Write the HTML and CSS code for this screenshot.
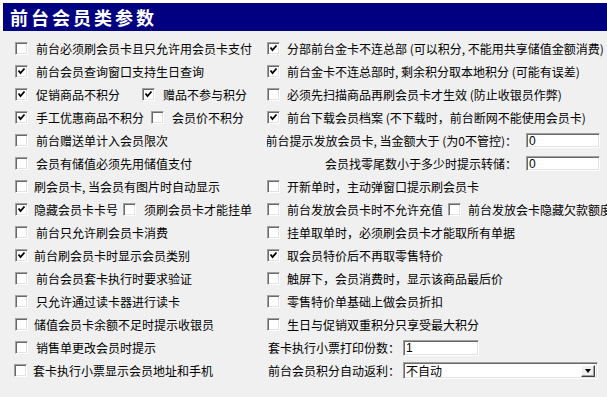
FILE: index.html
```html
<!DOCTYPE html>
<html lang="zh-CN">
<head>
    <meta charset="UTF-8">
    <title>前台会员类参数</title>
    <link rel="stylesheet" href="styles.css">
</head>
<body>
    <div class="title-wrap">
        <div class="title">前台会员类参数</div>
    </div>

    <div class="params">
        <!-- row 1 -->
        <div class="cell"><span class="cb"></span><span class="txt">前台必须刷会员卡且只允许用会员卡支付</span></div>
        <div class="cell right"><span class="cb on"><svg viewBox="0 0 9 9"><polyline points="1.5,3.5 3.5,6 7.5,1.5"/></svg></span><span class="txt">分部前台金卡不连总部 (可以积分, 不能用共享储值金额消费)</span></div>

        <!-- row 2 -->
        <div class="cell"><span class="cb on"><svg viewBox="0 0 9 9"><polyline points="1.5,3.5 3.5,6 7.5,1.5"/></svg></span><span class="txt">前台会员查询窗口支持生日查询</span></div>
        <div class="cell right"><span class="cb on"><svg viewBox="0 0 9 9"><polyline points="1.5,3.5 3.5,6 7.5,1.5"/></svg></span><span class="txt">前台金卡不连总部时, 剩余积分取本地积分 (可能有误差)</span></div>

        <!-- row 3 -->
        <div class="cell">
            <span class="cb on"><svg viewBox="0 0 9 9"><polyline points="1.5,3.5 3.5,6 7.5,1.5"/></svg></span><span class="txt">促销商品不积分</span>
            <span class="cb on sub-wide"><svg viewBox="0 0 9 9"><polyline points="1.5,3.5 3.5,6 7.5,1.5"/></svg></span><span class="txt">赠品不参与积分</span>
        </div>
        <div class="cell right"><span class="cb"></span><span class="txt">必须先扫描商品再刷会员卡才生效 (防止收银员作弊)</span></div>

        <!-- row 4 -->
        <div class="cell">
            <span class="cb on"><svg viewBox="0 0 9 9"><polyline points="1.5,3.5 3.5,6 7.5,1.5"/></svg></span><span class="txt">手工优惠商品不积分</span>
            <span class="cb sub"></span><span class="txt">会员价不积分</span>
        </div>
        <div class="cell right"><span class="cb on"><svg viewBox="0 0 9 9"><polyline points="1.5,3.5 3.5,6 7.5,1.5"/></svg></span><span class="txt">前台下载会员档案 (不下载时，前台断网不能使用会员卡)</span></div>

        <!-- row 5 -->
        <div class="cell"><span class="cb"></span><span class="txt">前台赠送单计入会员限次</span></div>
        <div class="cell right field-end">
            <span class="lbl">前台提示发放会员卡, 当金额大于 (为0不管控)：</span>
            <input class="box short" type="text" value="0">
        </div>

        <!-- row 6 -->
        <div class="cell"><span class="cb"></span><span class="txt">会员有储值必须先用储值支付</span></div>
        <div class="cell right field-end">
            <span class="lbl">会员找零尾数小于多少时提示转储：</span>
            <input class="box short" type="text" value="0">
        </div>

        <!-- row 7 -->
        <div class="cell"><span class="cb"></span><span class="txt tight">刷会员卡, 当会员有图片时自动显示</span></div>
        <div class="cell right"><span class="cb"></span><span class="txt">开新单时，主动弹窗口提示刷会员卡</span></div>

        <!-- row 8 -->
        <div class="cell">
            <span class="cb on"><svg viewBox="0 0 9 9"><polyline points="1.5,3.5 3.5,6 7.5,1.5"/></svg></span><span class="txt tight">隐藏会员卡卡号</span>
            <span class="cb sub-close"></span><span class="txt">须刷会员卡才能挂单</span>
        </div>
        <div class="cell right">
            <span class="cb"></span><span class="txt">前台发放会员卡时不允许充值</span>
            <span class="cb sub-close"></span><span class="txt">前台发放会卡隐藏欠款额度</span>
        </div>

        <!-- row 9 -->
        <div class="cell"><span class="cb"></span><span class="txt">前台只允许刷会员卡消费</span></div>
        <div class="cell right"><span class="cb"></span><span class="txt">挂单取单时，必须刷会员卡才能取所有单据</span></div>

        <!-- row 10 -->
        <div class="cell"><span class="cb on"><svg viewBox="0 0 9 9"><polyline points="1.5,3.5 3.5,6 7.5,1.5"/></svg></span><span class="txt tight">前台刷会员卡时显示会员类别</span></div>
        <div class="cell right"><span class="cb on"><svg viewBox="0 0 9 9"><polyline points="1.5,3.5 3.5,6 7.5,1.5"/></svg></span><span class="txt">取会员特价后不再取零售特价</span></div>

        <!-- row 11 -->
        <div class="cell"><span class="cb"></span><span class="txt">前台会员套卡执行时要求验证</span></div>
        <div class="cell right"><span class="cb"></span><span class="txt">触屏下，会员消费时，显示该商品最后价</span></div>

        <!-- row 12 -->
        <div class="cell"><span class="cb"></span><span class="txt">只允许通过读卡器进行读卡</span></div>
        <div class="cell right"><span class="cb"></span><span class="txt tight">零售特价单基础上做会员折扣</span></div>

        <!-- row 13 -->
        <div class="cell"><span class="cb"></span><span class="txt tight">储值会员卡余额不足时提示收银员</span></div>
        <div class="cell right"><span class="cb"></span><span class="txt">生日与促销双重积分只享受最大积分</span></div>

        <!-- row 14 -->
        <div class="cell"><span class="cb"></span><span class="txt">销售单更改会员时提示</span></div>
        <div class="cell right field">
            <span class="lbl">套卡执行小票打印份数：</span>
            <input class="box copies" type="text" value="1">
        </div>

        <!-- row 15 -->
        <div class="cell last"><span class="cb"></span><span class="txt tight">套卡执行小票显示会员地址和手机</span></div>
        <div class="cell right field">
            <span class="lbl">前台会员积分自动返利：</span>
            <div class="combo">
                <span class="combo-val">不自动</span>
                <span class="drop"><span class="arrow"></span></span>
            </div>
        </div>
    </div>
</body>
</html>
```

FILE: styles.css
```css
body {
    margin: 0;
    background: #f0f0f0;
    font-family: "Noto Sans CJK SC", "Noto Sans", sans-serif;
    font-size: 12px;
    color: #000;
    width: 607px;
    height: 397px;
    overflow: hidden;
}

.title-wrap {
    background: #fff;
    padding: 3px 0 0 3px;
}

.title {
    background: #000080;
    color: #fff;
    height: 28px;
    line-height: 28px;
    padding-left: 7px;
    font-size: 18px;
    font-weight: bold;
    letter-spacing: 3px;
}

.params {
    display: grid;
    grid-template-columns: 252px 340px;
    grid-auto-rows: 23px;
    padding: 6px 0 0 15px;
}

.cell {
    display: flex;
    align-items: center;
    white-space: nowrap;
    overflow: hidden;
}

.cell.last {
    margin-left: -1px;
}

.txt {
    margin-left: 8px;
    line-height: 14px;
}

.txt.tight {
    margin-left: 6px;
}

.right .txt {
    margin-left: 7px;
}

/* classic sunken 3d checkbox */
.cb {
    flex: none;
    width: 13px;
    height: 13px;
    box-sizing: border-box;
    background: #fff;
    border: 1px solid;
    border-color: #a0a0a0 #fff #fff #a0a0a0;
    box-shadow: inset 1px 1px #696969, inset -1px -1px #e3e3e3;
    display: flex;
    align-items: center;
    justify-content: center;
}

.cb svg {
    width: 9px;
    height: 9px;
}

.cb polyline {
    fill: none;
    stroke: #000;
    stroke-width: 1.8;
}

.cb.sub-wide {
    margin-left: 22px;
}

.cb.sub {
    margin-left: 7px;
}

.cb.sub-close {
    margin-left: 5px;
}

.lbl {
    line-height: 14px;
}

.field-end {
    justify-content: flex-end;
    padding-right: 7px;
}

.field .lbl {
    margin-left: 1px;
}

.box {
    box-sizing: border-box;
    height: 15px;
    margin: 0 0 0 9px;
    padding: 0 0 0 2px;
    background: #fff;
    border: 1px solid;
    border-color: #a0a0a0 #fff #fff #a0a0a0;
    box-shadow: inset 1px 1px #696969, inset -1px -1px #e3e3e3;
    font-family: "Liberation Sans", sans-serif;
    font-size: 12px;
    line-height: 13px;
    outline: none;
}

.box.short {
    width: 74px;
}

.box.copies {
    width: 76px;
    height: 16px;
    margin-left: 3px;
}

.combo {
    box-sizing: border-box;
    width: 195px;
    height: 17px;
    margin-left: 3px;
    background: #fff;
    border: 1px solid;
    border-color: #a0a0a0 #fff #fff #a0a0a0;
    box-shadow: inset 1px 1px #696969, inset -1px -1px #e3e3e3;
    display: flex;
    align-items: center;
    justify-content: space-between;
    padding: 0 2px;
}

.combo-val {
    line-height: 13px;
}

.drop {
    width: 14px;
    height: 12px;
    box-sizing: border-box;
    background: #f0f0f0;
    border: 1px solid;
    border-color: #fff #404040 #404040 #fff;
    box-shadow: inset -1px -1px #a0a0a0;
    display: flex;
    align-items: center;
    justify-content: center;
}

.arrow {
    width: 0;
    height: 0;
    border-left: 3.5px solid transparent;
    border-right: 3.5px solid transparent;
    border-top: 4px solid #000;
}
```
